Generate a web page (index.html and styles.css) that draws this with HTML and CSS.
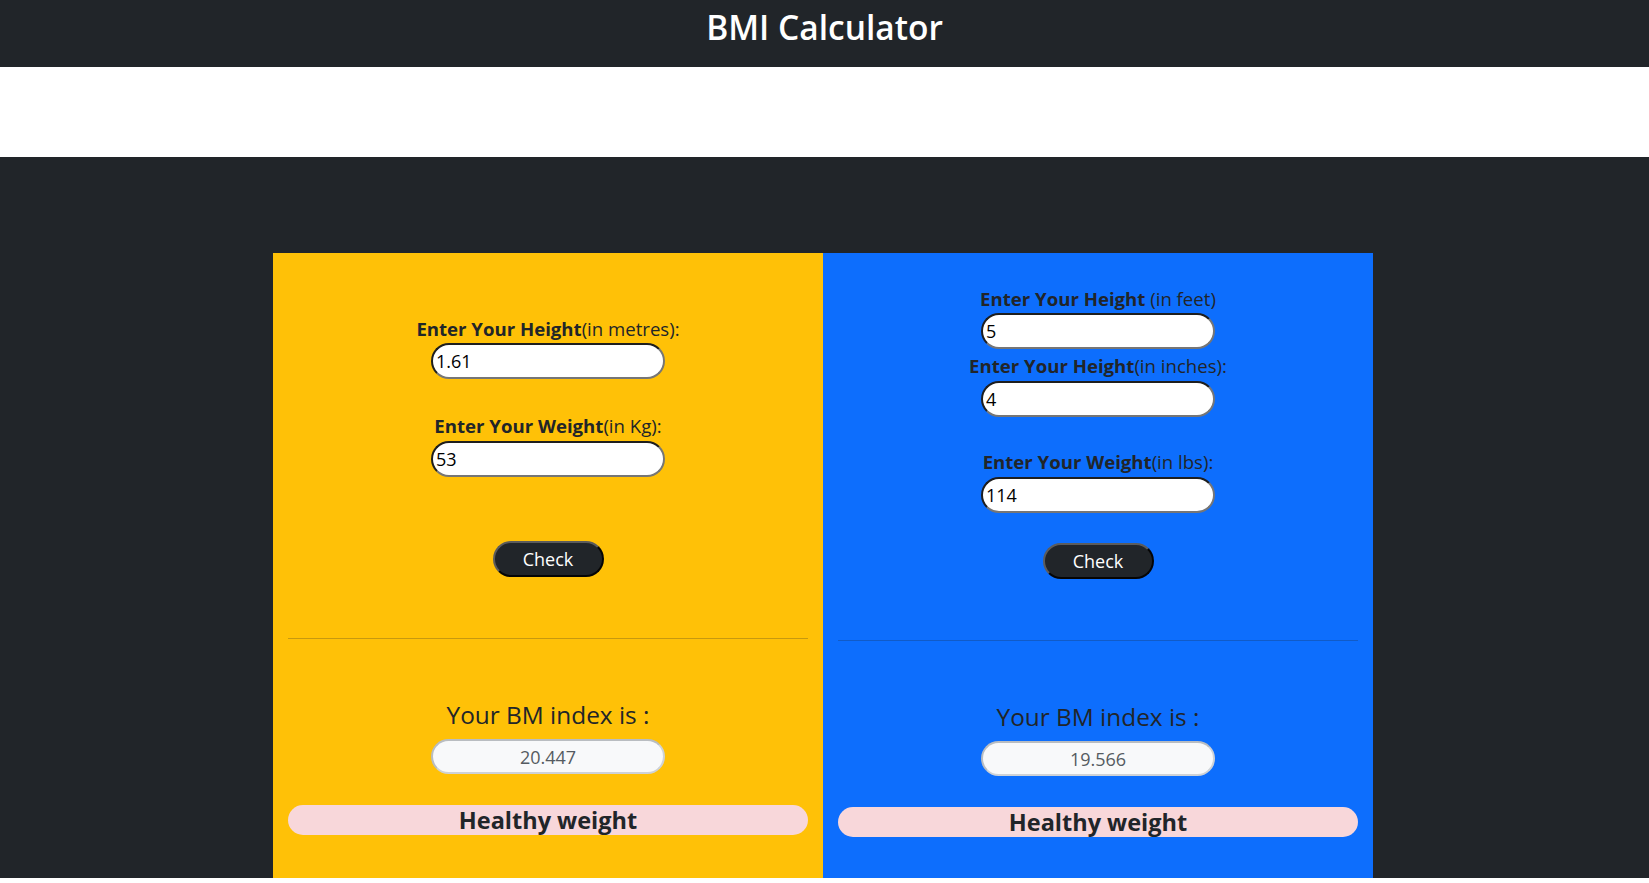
FILE: index.html
```html
<!DOCTYPE html>
<html lang="en">
<head>
<meta charset="utf-8">
<title>BMI Calculator</title>
<link rel="stylesheet" href="styles.css">
</head>
<body>
<header class="topbar">
  <h1 class="title">BMI Calculator</h1>
</header>
<div class="spacer"></div>
<main class="stage">
  <div class="cards">
    <section class="card card-yellow">
      <label class="lbl"><b>Enter Your Height</b>(in metres):</label>
      <input class="field" type="text" value="1.61">
      <label class="lbl lbl-far"><b>Enter Your Weight</b>(in Kg):</label>
      <input class="field field-tight" type="text" value="53">
      <button class="check check-far" type="button">Check</button>
      <hr class="divider">
      <p class="bmi-title">Your BM index is :</p>
      <input class="out" type="text" value="20.447" readonly>
      <div class="status">Healthy weight</div>
    </section>
    <section class="card card-blue">
      <label class="lbl"><b>Enter Your Height</b> (in feet)</label>
      <input class="field" type="text" value="5">
      <label class="lbl lbl-near"><b>Enter Your Height</b>(in inches):</label>
      <input class="field field-tight" type="text" value="4">
      <label class="lbl lbl-mid"><b>Enter Your Weight</b>(in lbs):</label>
      <input class="field field-tight" type="text" value="114">
      <button class="check check-near" type="button">Check</button>
      <hr class="divider">
      <p class="bmi-title">Your BM index is :</p>
      <input class="out" type="text" value="19.566" readonly>
      <div class="status">Healthy weight</div>
    </section>
  </div>
</main>
</body>
</html>
```

FILE: styles.css
```css
* {
  box-sizing: border-box;
}

body {
  margin: 0;
  font-family: "Open Sans", "Noto Sans", sans-serif;
  color: #212529;
  background: #fff;
}

.topbar {
  background: #212529;
  height: 67px;
  padding-top: 7px;
}

.title {
  margin: 0;
  text-align: center;
  color: #fff;
  font-size: 33.5px;
  font-weight: 600;
  line-height: 40px;
}

.spacer {
  height: 90px;
}

.stage {
  background: #212529;
  padding-top: 96px;
  padding-right: 3px;
  height: 721px;
}

.cards {
  width: 1100px;
  margin: 0 auto;
  display: grid;
  grid-template-columns: 1fr 1fr;
  height: 625px;
}

.card {
  padding: 0 15px;
  display: flex;
  flex-direction: column;
  align-items: center;
}

.card-yellow {
  background: #ffc107;
  padding-top: 64px;
}

.card-blue {
  background: #0d6efd;
  padding-top: 34px;
}

.lbl {
  display: block;
  font-size: 18.6px;
  line-height: 24px;
  text-align: center;
  color: #212529;
  white-space: nowrap;
}

.lbl b {
  font-weight: 700;
}

.lbl-far {
  margin-top: 35px;
}

.lbl-near {
  margin-top: 5px;
}

.lbl-mid {
  margin-top: 33px;
}

.field {
  display: block;
  width: 234px;
  height: 36px;
  margin: 2px 0 0;
  padding: 0 3px;
  border-radius: 18px;
  border: 2px solid;
  border-color: #1e1e1e #767676 #767676 #1e1e1e;
  background: #fff;
  font-family: "Open Sans", "Noto Sans", sans-serif;
  font-size: 18px;
  color: #000;
  outline: none;
}

.field-tight {
  margin-top: 3px;
}

.check {
  display: block;
  width: 111px;
  height: 36px;
  border-radius: 18px;
  background: #212529;
  color: #fff;
  font-family: "Open Sans", "Noto Sans", sans-serif;
  font-size: 18px;
  line-height: 1;
  padding: 0;
  border: 2px solid;
  border-color: #5c5c5c #050505 #050505 #5c5c5c;
}

.check-far {
  margin-top: 64px;
}

.check-near {
  margin-top: 30px;
}

.divider {
  align-self: stretch;
  margin: 61px 0 0;
  border: 0;
  border-top: 1px solid #212529;
  opacity: 0.25;
  height: 0;
}

.bmi-title {
  margin: 60px 0 0;
  font-size: 24.4px;
  line-height: 32px;
  text-align: center;
  color: #212529;
}

.out {
  display: block;
  width: 234px;
  height: 35px;
  margin-top: 8px;
  border-radius: 18px;
  border: 2px solid;
  border-color: #b9bdc1 #ced2d6 #ced2d6 #b9bdc1;
  background: #f8f9fa;
  text-align: center;
  font-family: "Open Sans", "Noto Sans", sans-serif;
  font-size: 18px;
  color: #555b61;
  outline: none;
}

.status {
  align-self: stretch;
  margin-top: 31px;
  height: 30px;
  border-radius: 15px;
  background: #f8d7da;
  text-align: center;
  font-size: 23.5px;
  font-weight: 700;
  line-height: 30px;
  color: #212529;
}
```
